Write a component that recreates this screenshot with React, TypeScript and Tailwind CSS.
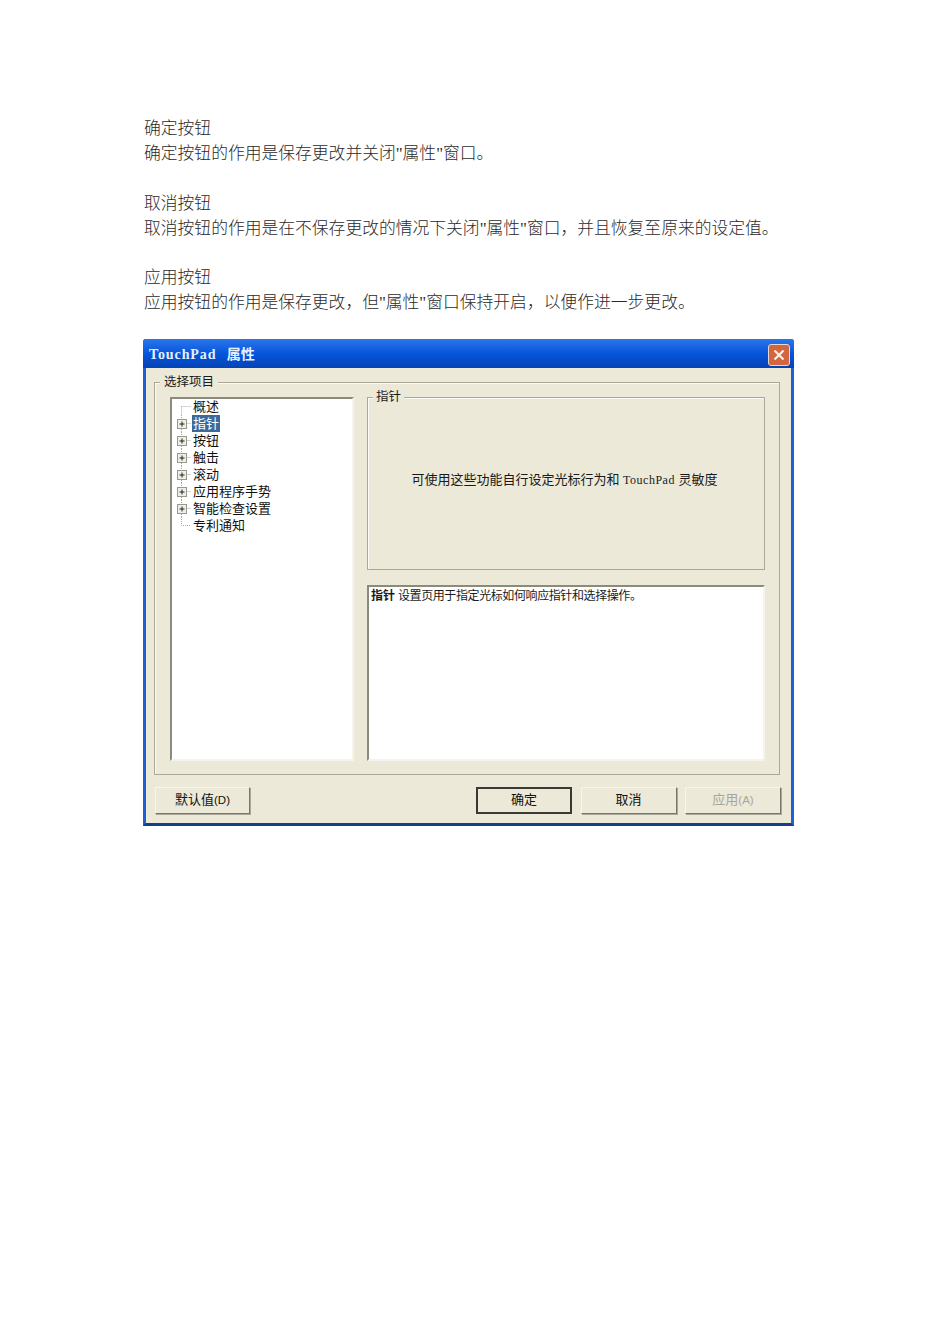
const treeItems = [
  { label: "概述", expand: false, pos: "first" },
  { label: "指针", expand: true, selected: true },
  { label: "按钮", expand: true },
  { label: "触击", expand: true },
  { label: "滚动", expand: true },
  { label: "应用程序手势", expand: true },
  { label: "智能检查设置", expand: true },
  { label: "专利通知", expand: false, pos: "last" },
];

const sections = [
  { title: "确定按钮", body: '确定按钮的作用是保存更改并关闭"属性"窗口。' },
  { title: "取消按钮", body: '取消按钮的作用是在不保存更改的情况下关闭"属性"窗口，并且恢复至原来的设定值。' },
  { title: "应用按钮", body: '应用按钮的作用是保存更改，但"属性"窗口保持开启，以便作进一步更改。' },
];

const TreeGlyph = ({ expand, pos }: { expand: boolean; pos?: string }) => (
  <svg width="20" height="17" viewBox="0 0 20 17" className="shrink-0">
    <path
      d={pos === "last" ? "M9.5 0V8.5H19" : pos === "first" ? "M9.5 8.5V17M9.5 8.5H19" : "M9.5 0V17M9.5 8.5H19"}
      stroke="#a8a8a0"
      strokeDasharray="1 1"
      fill="none"
    />
    {expand && (
      <g>
        <rect x="5.5" y="4.5" width="9" height="9" fill="#efeee6" stroke="#98988c" />
        <path d="M7.5 9H12.5M10 6.5V11.5" stroke="#222" fill="none" />
      </g>
    )}
  </svg>
);

const DlgButton = ({
  label,
  suffix,
  isDefault,
  disabled,
  className = "w-[96px]",
}: {
  label: string;
  suffix?: string;
  isDefault?: boolean;
  disabled?: boolean;
  className?: string;
}) => (
  <button
    className={
      "h-[27px] bg-[#ece9d8] pb-[2px] text-[13px] " +
      className +
      (isDefault
        ? " border-2 border-[#3a3a34]"
        : " border border-t-[#f7f6ee] border-l-[#f7f6ee] border-r-[#77766a] border-b-[#77766a] shadow-[1px_1px_0_#aaa89a]") +
      (disabled ? " text-[#a8a69a]" : " text-[#111]")
    }
  >
    {label}
    {suffix && <span className="text-[11.5px]">{suffix}</span>}
  </button>
);

export default function App() {
  return (
    <div className="min-h-[1344px] bg-white pl-[143px] pt-[117px] font-['Liberation_Serif','Noto_Sans_CJK_SC',serif]">
      <div className="pl-px text-[16.8px] leading-[24.9px] font-light text-[#2a2a2a]">
        {sections.map((s) => (
          <div key={s.title} className="mb-[24.9px] last:mb-0">
            <p>{s.title}</p>
            <p>{s.body}</p>
          </div>
        ))}
      </div>

      <div className="mt-[23px] flex h-[487px] w-[651px] flex-col rounded-t-[3px] border-x-[3px] border-b-[3px] border-x-[#1d5fd6] border-b-[#123f8c] bg-[#ece9d8] font-['Liberation_Sans','Noto_Sans_CJK_SC',sans-serif] text-[13px] text-[#1a1a1a]">
        <div className="-mx-[3px] flex h-[29px] shrink-0 items-center justify-between rounded-t-[3px] bg-gradient-to-b from-[#2a76ea] via-[#0655dc] to-[#0342b4] pl-[6px] pr-[4px]">
          <span className="pt-[2px] font-['Liberation_Serif','Noto_Sans_CJK_SC',serif] text-[14px] font-bold tracking-[0.9px] text-[#e8f0ff]">
            TouchPad <span className="ml-[6px] tracking-normal">属性</span>
          </span>
          <div className="mt-[2px] flex h-[22px] w-[22px] items-center justify-center rounded-[3px] border border-[#e4d8d0] bg-[#d2663f]">
            <svg width="14" height="14" viewBox="0 0 14 14">
              <path d="M2.5 2.5L11.5 11.5M11.5 2.5L2.5 11.5" stroke="#fbeee8" strokeWidth="2.2" fill="none" />
            </svg>
          </div>
        </div>

        <div className="flex flex-1 flex-col px-[8px]">
          <fieldset className="mt-[6px] h-[401px] w-[626px] border border-[#aca899] pl-[15px] shadow-[inset_1px_1px_0_#fbfaf4]">
            <legend className="-ml-[10px] bg-[#ece9d8] px-[4px] text-[12.5px] leading-[17px]">选择项目</legend>
            <div className="mt-[6px] flex gap-[13px]">
              <div className="h-[364px] w-[184px] border-2 border-t-[#8c8a7c] border-l-[#8c8a7c] border-r-[#f4f3ec] border-b-[#f4f3ec] bg-white">
                <div className="-mt-px">
                  {treeItems.map((item) => (
                    <div key={item.label} className="flex h-[17px] items-center">
                      <TreeGlyph expand={item.expand} pos={item.pos} />
                      <span
                        className={
                          "px-[1px] text-[13px] leading-[17px] " +
                          (item.selected ? "bg-[#3b6a9a] text-white" : "text-[#111]")
                        }
                      >
                        {item.label}
                      </span>
                    </div>
                  ))}
                </div>
              </div>

              <div className="flex w-[398px] flex-col">
                <fieldset className="-mt-[8px] h-[181px] border border-[#aca899] shadow-[inset_1px_1px_0_#fbfaf4]">
                  <legend className="ml-[5px] bg-[#ece9d8] px-[3px] text-[12.5px] leading-[16px]">指针</legend>
                  <div className="flex h-[164px] items-center justify-center pb-[14px] pr-[3px] text-[13px]">
                    <span>
                      可使用这些功能自行设定光标行为和{" "}
                      <span className="font-['Liberation_Serif','Noto_Sans_CJK_SC',serif] text-[12px] tracking-[0.5px]">TouchPad</span>{" "}
                      灵敏度
                    </span>
                  </div>
                </fieldset>
                <div className="mt-[15px] h-[176px] border-2 border-t-[#8c8a7c] border-l-[#8c8a7c] border-r-[#f4f3ec] border-b-[#f4f3ec] bg-white px-[2px] pt-[1px] text-[12px] leading-[16px] tracking-[-0.4px]">
                  <span className="font-bold tracking-normal">指针</span> 设置页用于指定光标如何响应指针和选择操作。
                </div>
              </div>
            </div>
          </fieldset>

          <div className="mt-[12px] flex items-start pl-px pr-[2px]">
            <DlgButton label="默认值" suffix="(D)" className="w-[95px]" />
            <div className="ml-auto flex gap-[8.5px]">
              <DlgButton label="确定" isDefault />
              <DlgButton label="取消" />
              <DlgButton label="应用" suffix="(A)" disabled />
            </div>
          </div>
        </div>
      </div>
    </div>
  );
}
